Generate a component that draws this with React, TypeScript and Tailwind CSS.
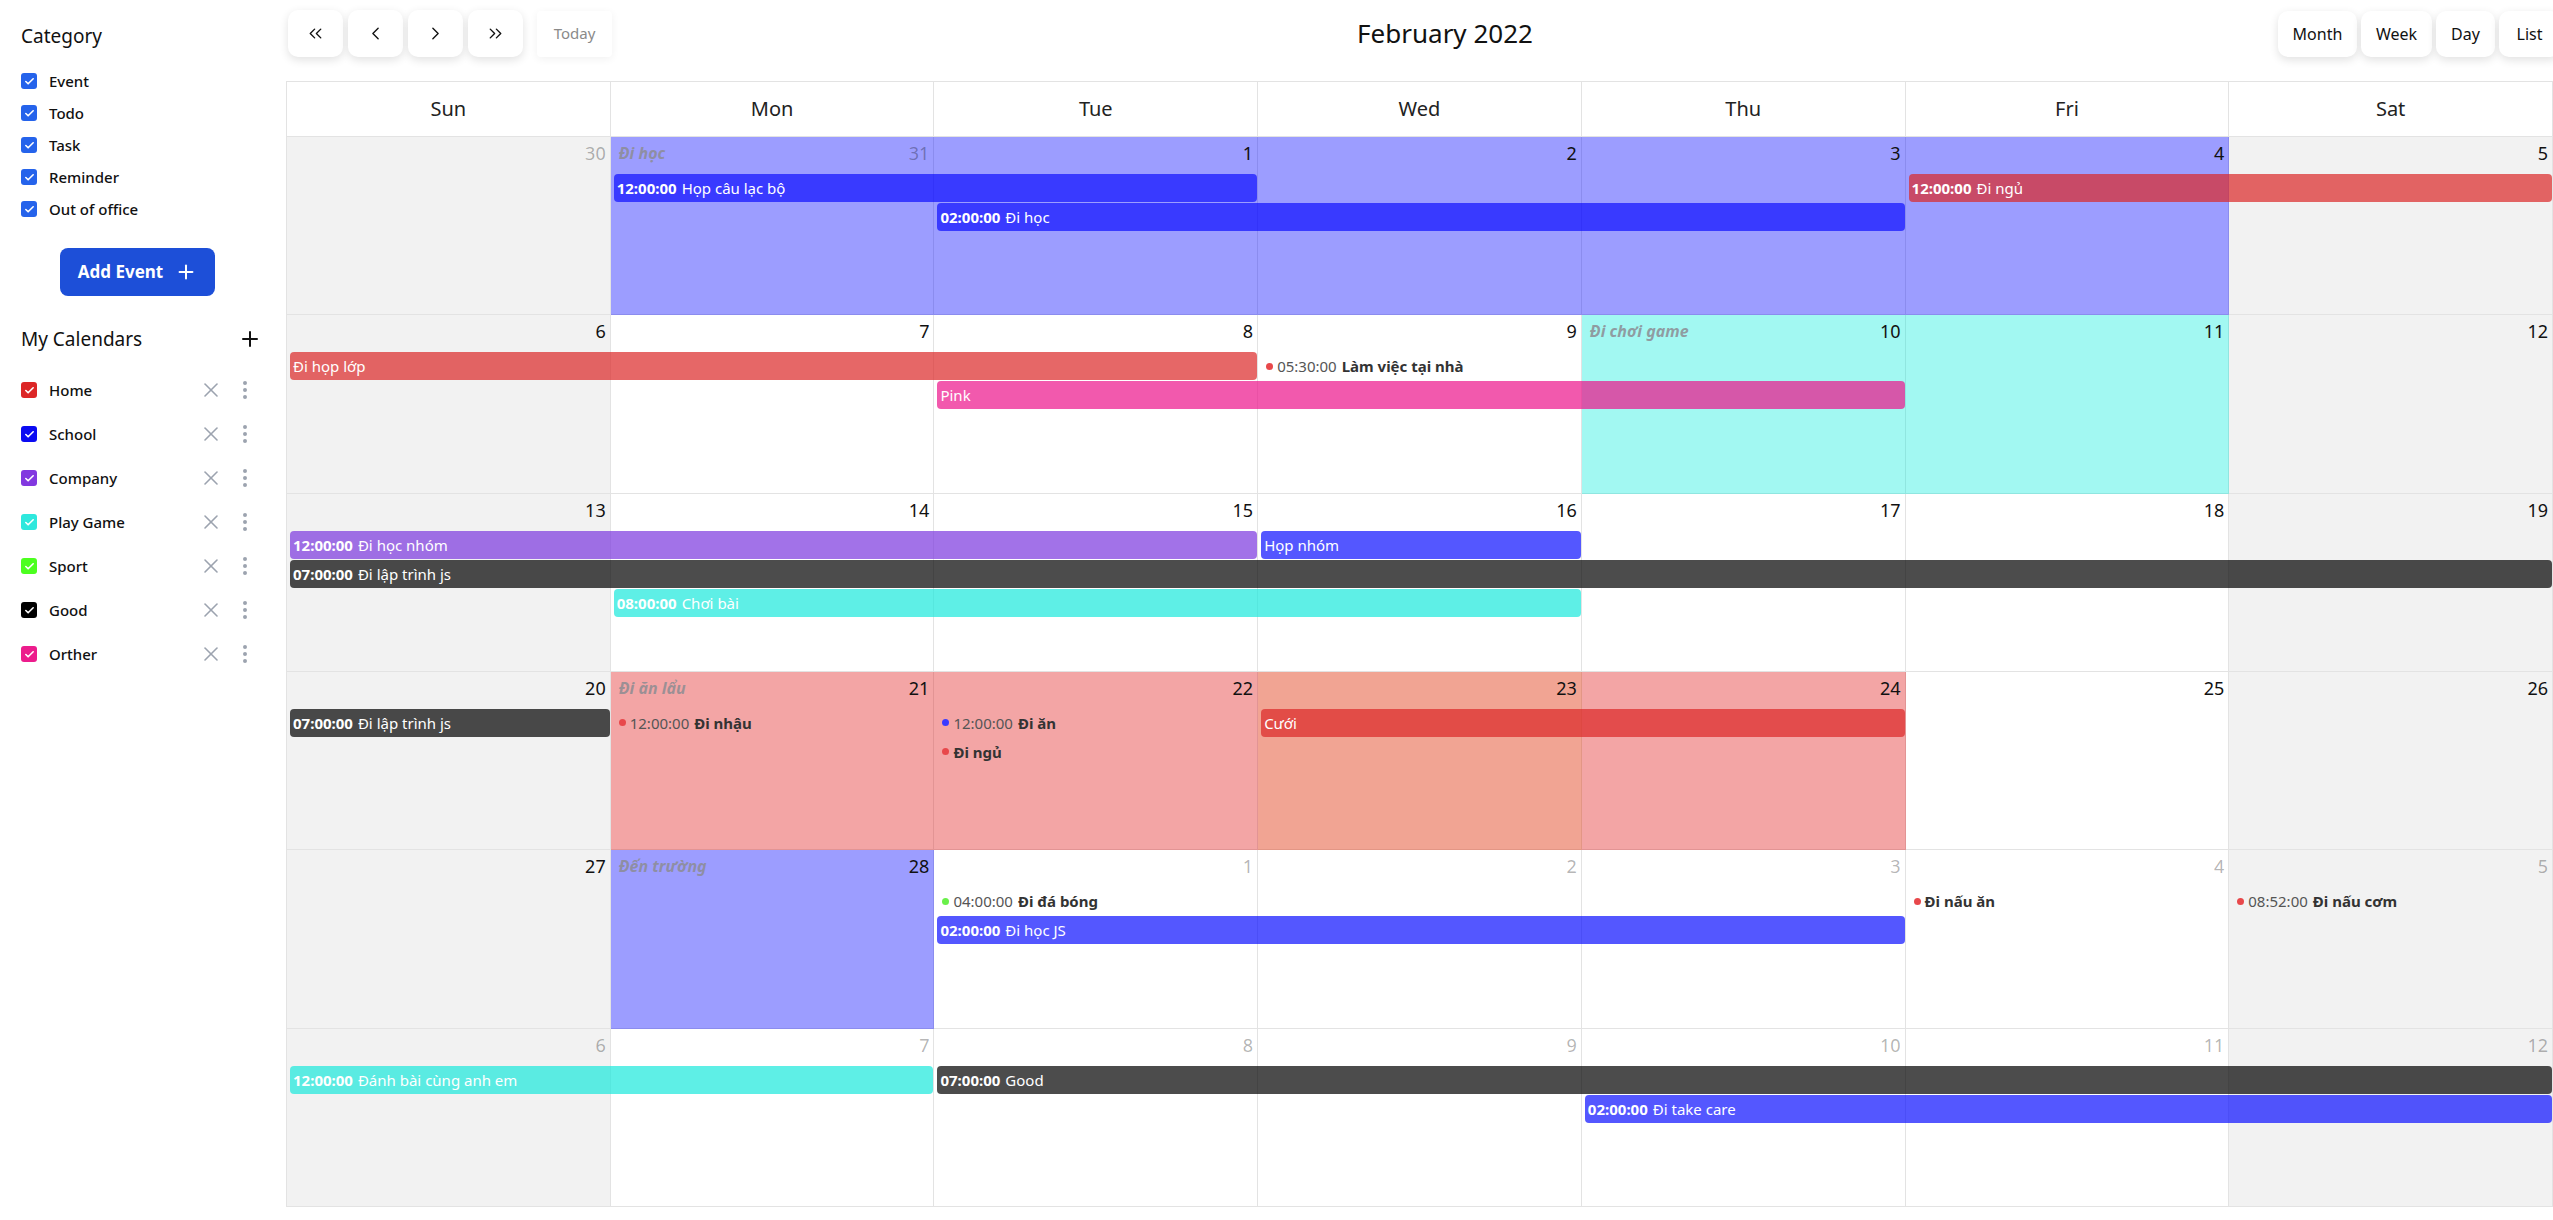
import React from 'react';
import { Check, X, EllipsisVertical, Plus, ChevronsLeft, ChevronLeft, ChevronRight, ChevronsRight } from 'lucide-react';

const COL_START = ['col-start-1', 'col-start-2', 'col-start-3', 'col-start-4', 'col-start-5', 'col-start-6', 'col-start-7'];
const COL_SPAN = ['col-span-1', 'col-span-2', 'col-span-3', 'col-span-4', 'col-span-5', 'col-span-6', 'col-span-7'];
const ROW_START = ['row-start-1', 'row-start-2', 'row-start-3', 'row-start-4'];

// event bars are the calendar colour at ~70% opacity, so they darken over background events
const BAR = {
  blue: 'bg-[rgba(0,0,255,0.63)]',
  indigo: 'bg-[rgba(0,5,255,0.67)]',
  red: 'bg-[rgba(220,38,38,0.7)]',
  pink: 'bg-[rgba(236,19,138,0.7)]',
  purple: 'bg-[rgba(122,54,222,0.7)]',
  dark: 'bg-[rgba(0,0,0,0.7)]',
  cyan: 'bg-[rgba(25,232,219,0.7)]',
};

const BG = {
  blue: 'bg-[rgba(0,3,255,0.39)]',
  teal: 'bg-[rgba(0,235,220,0.365)]',
  red: 'bg-[rgba(225,30,30,0.4)]',
  orange: 'bg-[rgba(234,160,60,0.17)]',
};

const DOT = {
  red: 'bg-[#e8484b]',
  blue: 'bg-[#3b3bff]',
  green: 'bg-[#6af04a]',
};

type BarEv = { col: number; span: number; slot: number; color: keyof typeof BAR; time?: string; title: string };
type DotEv = { col: number; slot: number; color: keyof typeof DOT; time?: string; title: string };
type BgEv = { col: number; span: number; color: keyof typeof BG; title?: string };
type Week = { days: number[]; other: boolean[]; bgs: BgEv[]; bars: BarEv[]; dots: DotEv[] };

const F = false;
const T = true;

const WEEKS: Week[] = [
  {
    days: [30, 31, 1, 2, 3, 4, 5],
    other: [T, T, F, F, F, F, F],
    bgs: [{ col: 1, span: 5, color: 'blue', title: 'Đi học' }],
    bars: [
      { col: 1, span: 2, slot: 1, color: 'blue', time: '12:00:00', title: 'Họp câu lạc bộ' },
      { col: 2, span: 3, slot: 2, color: 'blue', time: '02:00:00', title: 'Đi học' },
      { col: 5, span: 2, slot: 1, color: 'red', time: '12:00:00', title: 'Đi ngủ' },
    ],
    dots: [],
  },
  {
    days: [6, 7, 8, 9, 10, 11, 12],
    other: [F, F, F, F, F, F, F],
    bgs: [{ col: 4, span: 2, color: 'teal', title: 'Đi chơi game' }],
    bars: [
      { col: 0, span: 3, slot: 1, color: 'red', title: 'Đi họp lớp' },
      { col: 2, span: 3, slot: 2, color: 'pink', title: 'Pink' },
    ],
    dots: [{ col: 3, slot: 1, color: 'red', time: '05:30:00', title: 'Làm việc tại nhà' }],
  },
  {
    days: [13, 14, 15, 16, 17, 18, 19],
    other: [F, F, F, F, F, F, F],
    bgs: [],
    bars: [
      { col: 0, span: 3, slot: 1, color: 'purple', time: '12:00:00', title: 'Đi học nhóm' },
      { col: 3, span: 1, slot: 1, color: 'indigo', title: 'Họp nhóm' },
      { col: 0, span: 7, slot: 2, color: 'dark', time: '07:00:00', title: 'Đi lập trình js' },
      { col: 1, span: 3, slot: 3, color: 'cyan', time: '08:00:00', title: 'Chơi bài' },
    ],
    dots: [],
  },
  {
    days: [20, 21, 22, 23, 24, 25, 26],
    other: [F, F, F, F, F, F, F],
    bgs: [
      { col: 1, span: 4, color: 'red', title: 'Đi ăn lẩu' },
      { col: 3, span: 1, color: 'orange' },
    ],
    bars: [
      { col: 0, span: 1, slot: 1, color: 'dark', time: '07:00:00', title: 'Đi lập trình js' },
      { col: 3, span: 2, slot: 1, color: 'red', title: 'Cưới' },
    ],
    dots: [
      { col: 1, slot: 1, color: 'red', time: '12:00:00', title: 'Đi nhậu' },
      { col: 2, slot: 1, color: 'blue', time: '12:00:00', title: 'Đi ăn' },
      { col: 2, slot: 2, color: 'red', title: 'Đi ngủ' },
    ],
  },
  {
    days: [27, 28, 1, 2, 3, 4, 5],
    other: [F, F, T, T, T, T, T],
    bgs: [{ col: 1, span: 1, color: 'blue', title: 'Đến trường' }],
    bars: [{ col: 2, span: 3, slot: 2, color: 'indigo', time: '02:00:00', title: 'Đi học JS' }],
    dots: [
      { col: 2, slot: 1, color: 'green', time: '04:00:00', title: 'Đi đá bóng' },
      { col: 5, slot: 1, color: 'red', title: 'Đi nấu ăn' },
      { col: 6, slot: 1, color: 'red', time: '08:52:00', title: 'Đi nấu cơm' },
    ],
  },
  {
    days: [6, 7, 8, 9, 10, 11, 12],
    other: [T, T, T, T, T, T, T],
    bgs: [],
    bars: [
      { col: 0, span: 2, slot: 1, color: 'cyan', time: '12:00:00', title: 'Đánh bài cùng anh em' },
      { col: 2, span: 5, slot: 1, color: 'dark', time: '07:00:00', title: 'Good' },
      { col: 4, span: 3, slot: 2, color: 'indigo', time: '02:00:00', title: 'Đi take care' },
    ],
    dots: [],
  },
];

const CATEGORIES = ['Event', 'Todo', 'Task', 'Reminder', 'Out of office'];

const CALENDARS = [
  { name: 'Home', color: 'bg-[#dc2626]' },
  { name: 'School', color: 'bg-[#0b0bf2]' },
  { name: 'Company', color: 'bg-[#8238e0]' },
  { name: 'Play Game', color: 'bg-[#2ee8dd]' },
  { name: 'Sport', color: 'bg-[#4cff1f]' },
  { name: 'Good', color: 'bg-black' },
  { name: 'Orther', color: 'bg-[#ec1c8c]' },
];

const DAYS = ['Sun', 'Mon', 'Tue', 'Wed', 'Thu', 'Fri', 'Sat'];

function Box({ color }: { color: string }) {
  return (
    <span className={`w-[16px] h-[16px] rounded-[3px] flex items-center justify-center shrink-0 ${color}`}>
      <Check size={11} strokeWidth={3.5} className="text-white" />
    </span>
  );
}

function NavBtn({ children }: { children: React.ReactNode }) {
  return (
    <button className="w-[55px] h-[47px] rounded-[10px] bg-white shadow-[0_3px_10px_rgba(0,0,0,0.12)] flex items-center justify-center text-[#111]">
      {children}
    </button>
  );
}

function ViewBtn({ label, w }: { label: string; w: string }) {
  return (
    <button className={`${w} h-[46px] rounded-[10px] bg-white shadow-[0_3px_10px_rgba(0,0,0,0.12)] text-[16px] text-[#111]`}>
      {label}
    </button>
  );
}

function WeekRow({ week }: { week: Week }) {
  return (
    <div className="flex-1 grid grid-cols-7 grid-rows-[37px_29px_29px_29px_1fr]">
      {week.days.map((_, i) => (
        <div
          key={'c' + i}
          className={`${COL_START[i]} row-span-full border-r border-b border-[#e3e3e3] ${i === 0 || i === 6 ? 'bg-[#f2f2f2]' : 'bg-white'}`}
        />
      ))}
      {week.bgs.map((b, i) => (
        <div key={'b' + i} className={`${COL_START[b.col]} ${COL_SPAN[b.span - 1]} row-span-full ${BG[b.color]} pl-[8px] pt-[4px]`}>
          {b.title && (
            <span className="text-[16px] leading-[24px] italic font-bold text-[rgba(140,140,146,0.85)]">{b.title}</span>
          )}
        </div>
      ))}
      {week.days.map((d, i) => (
        <div
          key={'n' + i}
          className={`${COL_START[i]} row-start-1 self-start justify-self-end pr-[5px] pt-[4px] text-[18px] leading-[24px] ${week.other[i] ? 'text-black/30' : 'text-[#111]'}`}
        >
          {d}
        </div>
      ))}
      {week.bars.map((e, i) => (
        <div
          key={'e' + i}
          className={`${COL_START[e.col]} ${COL_SPAN[e.span - 1]} ${ROW_START[e.slot]} h-[28px] ml-[3px] mr-[1px] rounded-[4px] ${BAR[e.color]} text-white text-[15px] leading-[28px] pl-[3px] whitespace-nowrap overflow-hidden`}
        >
          {e.time && <span className="font-bold mr-[5px]">{e.time}</span>}
          {e.title}
        </div>
      ))}
      {week.dots.map((e, i) => (
        <div
          key={'d' + i}
          className={`${COL_START[e.col]} ${ROW_START[e.slot]} h-[28px] flex items-center pl-[8px] text-[15px] whitespace-nowrap`}
        >
          <span className={`w-[7px] h-[7px] rounded-full mr-[4px] ${DOT[e.color]}`} />
          {e.time && <span className="text-[#555] mr-[5px]">{e.time}</span>}
          <span className="font-bold text-[#333]">{e.title}</span>
        </div>
      ))}
    </div>
  );
}

export default function App() {
  return (
    <div className="font-['Noto_Sans','Liberation_Sans',sans-serif] w-[2553px] h-[1220px] overflow-hidden bg-white flex text-[#111]">
      <aside className="w-[286px] shrink-0 pl-[21px] pr-[29px]">
        <div className="mt-[22px] text-[19px] leading-[28px]">Category</div>
        <div className="mt-[15px] flex flex-col">
          {CATEGORIES.map((c) => (
            <div key={c} className="h-[32px] flex items-center gap-[12px]">
              <Box color="bg-[#2563eb]" />
              <span className="text-[15px] font-medium">{c}</span>
            </div>
          ))}
        </div>
        <button className="mt-[23px] ml-[39px] w-[155px] h-[48px] rounded-[8px] bg-[#1d4fd8] text-white text-[17px] font-bold flex items-center justify-center gap-[12px]">
          Add Event
          <Plus size={22} strokeWidth={2.2} />
        </button>
        <div className="mt-[29px] h-[28px] flex items-center justify-between">
          <span className="text-[19px] leading-[28px]">My Calendars</span>
          <Plus size={24} strokeWidth={2} className="-mr-[5px]" />
        </div>
        <div className="mt-[15px] flex flex-col">
          {CALENDARS.map((c) => (
            <div key={c.name} className="h-[44px] flex items-center">
              <Box color={c.color} />
              <span className="ml-[12px] flex-1 text-[15px] font-medium">{c.name}</span>
              <X size={24} strokeWidth={1.6} className="text-[#9ca3af]" />
              <EllipsisVertical size={24} strokeWidth={2} className="ml-[10px] text-[#9ca3af]" />
            </div>
          ))}
        </div>
      </aside>

      <main className="flex-1 min-w-0">
        <div className="flex items-center justify-between h-[47px] mt-[10px] mb-[24px]">
          <div className="flex items-center gap-[5px] ml-[2px]">
            <NavBtn><ChevronsLeft size={21} strokeWidth={1.6} /></NavBtn>
            <NavBtn><ChevronLeft size={21} strokeWidth={1.6} /></NavBtn>
            <NavBtn><ChevronRight size={21} strokeWidth={1.6} /></NavBtn>
            <NavBtn><ChevronsRight size={21} strokeWidth={1.6} /></NavBtn>
            <button className="ml-[9px] w-[75px] h-[46px] rounded-[4px] bg-white shadow-[0_2px_8px_rgba(0,0,0,0.06)] text-[15px] text-[#8a8a8a]">
              Today
            </button>
          </div>
          <h2 className="text-[26px] text-[#111]">February 2022</h2>
          <div className="flex items-center gap-[4px] -mr-[7px]">
            <ViewBtn label="Month" w="w-[79px]" />
            <ViewBtn label="Week" w="w-[71px]" />
            <ViewBtn label="Day" w="w-[59px]" />
            <ViewBtn label="List" w="w-[61px]" />
          </div>
        </div>

        <div className="border-l border-t border-[#e3e3e3]">
          <div className="grid grid-cols-7 h-[55px]">
            {DAYS.map((d) => (
              <div key={d} className="border-r border-b border-[#e3e3e3] flex items-center justify-center text-[20px] text-[#222]">
                {d}
              </div>
            ))}
          </div>
          <div className="flex flex-col h-[1070px]">
            {WEEKS.map((w, i) => (
              <WeekRow key={i} week={w} />
            ))}
          </div>
        </div>
      </main>
    </div>
  );
}
